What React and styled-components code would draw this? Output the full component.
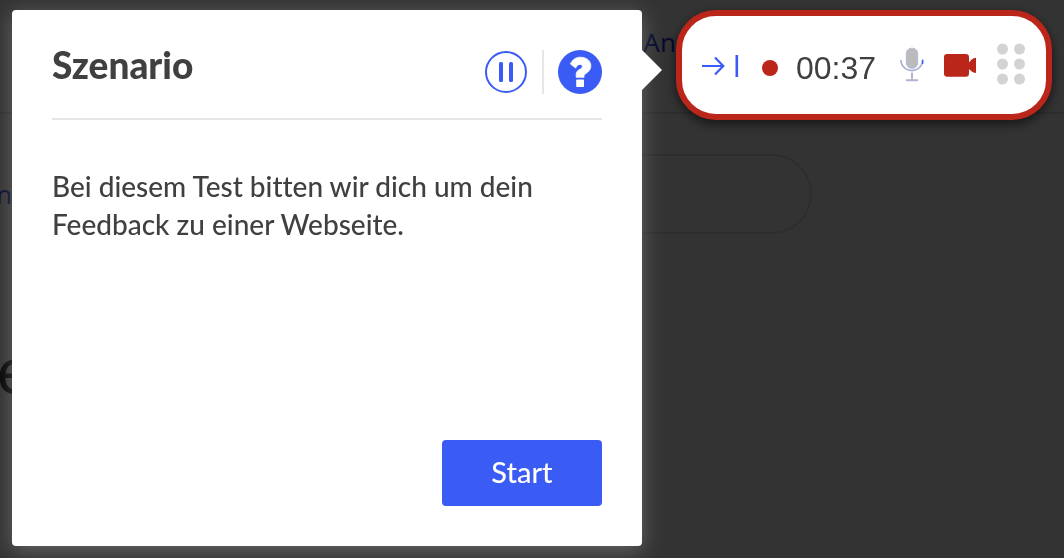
import React, {useState} from 'react';
import styled, {createGlobalStyle} from 'styled-components';

const blue = '#3b5bf5'
const red = '#bb261a'
const dark = '#404040'

const PauseIcon = () => (
  <svg width="44" height="44" viewBox="0 0 44 44" aria-hidden="true">
    <circle cx="22" cy="22" r="20" fill="none" stroke={blue} strokeWidth="2" />
    <rect x="15" y="12" width="4" height="20" rx="1.5" fill={blue} />
    <rect x="25" y="12" width="4" height="20" rx="1.5" fill={blue} />
  </svg>
)

const HelpIcon = () => (
  <svg width="44" height="44" viewBox="0 0 44 44" aria-hidden="true">
    <circle cx="22" cy="22" r="22" fill={blue} />
    <path
      d="M12.4 14C14.4 9.6 17.8 7.2 22.6 7.2C28.6 7.2 32.8 10.8 32.8 15.8C32.8 21.4 28.2 22.8 26 25.2V27.3H18.2V24C18.2 19.4 24.4 19.4 24.4 16.4C24.4 15 23.4 14.4 22 14.4C20 14.4 18.8 16 17.6 18Z"
      fill="#fff"
      stroke="#fff"
      strokeWidth="0.8"
      strokeLinejoin="round"
    />
    <rect x="18.2" y="29.4" width="7.8" height="7.6" rx="0.8" fill="#fff" />
  </svg>
)

const CollapseIcon = () => (
  <svg width="40" height="44" viewBox="0 0 40 44" aria-hidden="true">
    <path d="M0 23H21M13 14.5L21.3 23L13 31.5" fill="none" stroke={blue} strokeWidth="2.2" />
    <path d="M34.8 12V34" stroke={blue} strokeWidth="2.6" />
  </svg>
)

const MicIcon = () => (
  <svg width="28" height="44" viewBox="0 0 28 44" aria-hidden="true">
    <rect x="10.3" y="5.2" width="11.4" height="20" rx="5.2" fill="#bbb" stroke="#a9b3dd" strokeWidth="0.8" />
    <path d="M5 17V19A11 10.5 0 0 0 26.6 19V17" fill="none" stroke="#aeb4d0" strokeWidth="1.8" />
    <path d="M26.6 16.6V21" stroke={blue} strokeWidth="1.4" />
    <path d="M16 29.5V37M10 37.2H22" stroke="#aeb4d0" strokeWidth="1.9" />
  </svg>
)

const CameraIcon = () => (
  <svg width="33" height="44" viewBox="0 0 33 44" aria-hidden="true">
    <rect x="0" y="11" width="25" height="22.8" rx="3.2" fill={red} />
    <path d="M24 19H25.5C27 17 28.5 15.2 32 14.8V30C28.5 29.6 27 27.8 25.5 26.4H24Z" fill={red} />
  </svg>
)

const GripIcon = () => (
  <svg width="28" height="44" viewBox="0 0 28 44" aria-hidden="true">
    {[6, 21, 36].map(y => [5.5, 22.5].map(x => (
      <circle key={`${x}-${y}`} cx={x} cy={y} r="5.5" fill="#d3d3d3" />
    )))}
  </svg>
)

const App = () => {
  const [paused, setPaused] = useState(false)

  return (
    <>
      <GlobalStyle />
      <Page>
        <SiteHeader>
          <SiteLink href="#">An</SiteLink>
        </SiteHeader>
        <SearchRow>
          <SiteLink href="#">n</SiteLink>
          <SearchBox type="search" aria-label="Suche" />
        </SearchRow>
        <Headline>e</Headline>
      </Page>
      <Overlay>
        <Dialog role="dialog" aria-labelledby="scenario-title">
          <DialogHeader>
            <Title id="scenario-title">Szenario</Title>
            <Actions>
              <IconButton aria-label="Pause" aria-pressed={paused} onClick={() => setPaused(!paused)}>
                <PauseIcon />
              </IconButton>
              <Divider />
              <IconButton aria-label="Hilfe">
                <HelpIcon />
              </IconButton>
            </Actions>
          </DialogHeader>
          <Text>Bei diesem Test bitten wir dich um dein Feedback zu einer Webseite.</Text>
          <StartButton>Start</StartButton>
        </Dialog>
        <Recorder>
          <IconButton aria-label="Einklappen">
            <CollapseIcon />
          </IconButton>
          <Recording>
            <Dot />
            <time>00:37</time>
          </Recording>
          <IconButton aria-label="Mikrofon">
            <MicIcon />
          </IconButton>
          <IconButton aria-label="Kamera">
            <CameraIcon />
          </IconButton>
          <IconButton aria-label="Verschieben">
            <GripIcon />
          </IconButton>
        </Recorder>
      </Overlay>
    </>
  )
}

const GlobalStyle = createGlobalStyle`
  * {
    box-sizing: border-box;
  }
  body {
    margin: 0;
    background: #fff;
    color: ${dark};
    font-family: Lato, "Liberation Sans", sans-serif;
    font-variant-ligatures: none;
  }
`;

const Page = styled.div`
  min-height: 100vh;
  overflow: hidden;
  font-family: "Noto Sans", sans-serif;
`;

const SiteHeader = styled.header`
  display: flex;
  justify-content: flex-end;
  height: 114px;
  padding: 24px 388px 0 0;
  border-bottom: 2px solid #e0e0e0;
`;

const SiteLink = styled.a`
  color: #1f35e0;
  font-size: 26px;
  line-height: 36px;
  text-decoration: none;
`;

const SearchRow = styled.div`
  display: flex;
  align-items: center;
  gap: 40px;
  margin: 40px 252px 0 -4px;
`;

const SearchBox = styled.input`
  flex: 1;
  min-width: 0;
  height: 80px;
  padding: 0 40px;
  border: 2px solid #e0e0e0;
  border-radius: 40px;
  background: none;
`;

const Headline = styled.h1`
  margin: 96px 0 0 -4px;
  color: #222;
  font-size: 64px;
  font-weight: 400;
  line-height: 80px;
`;

const Overlay = styled.div`
  position: fixed;
  inset: 0;
  display: flex;
  align-items: flex-start;
  gap: 34px;
  padding: 10px 12px 12px;
  background: rgba(0, 0, 0, 0.8);
`;

const Dialog = styled.section`
  position: relative;
  display: flex;
  flex: 1;
  flex-direction: column;
  align-self: stretch;
  padding: 40px;
  border-radius: 4px;
  background: #fff;
  box-shadow: 0 4px 20px rgba(255, 255, 255, 0.25);

  &::after {
    content: '';
    position: absolute;
    top: 40px;
    left: 100%;
    border: 20px solid transparent;
    border-left-color: #fff;
    border-right-width: 0;
  }
`;

const DialogHeader = styled.header`
  display: flex;
  justify-content: space-between;
  padding-bottom: 24px;
  border-bottom: 2px solid #e6e6e6;
`;

const Title = styled.h2`
  margin: 0;
  font-size: 37px;
  font-weight: 900;
  line-height: 30px;
`;

const Actions = styled.div`
  display: flex;
  gap: 14px;
`;

const Divider = styled.span`
  width: 2px;
  background: #e6e6e6;
`;

const IconButton = styled.button`
  display: flex;
  padding: 0;
  border: 0;
  background: none;
  cursor: pointer;
`;

const Text = styled.p`
  margin: 47px 0;
  font-size: 28px;
  font-weight: 500;
  line-height: 38px;
`;

const StartButton = styled.button`
  align-self: flex-end;
  min-width: 160px;
  height: 66px;
  margin-top: auto;
  padding-bottom: 4px;
  border: 0;
  border-radius: 4px;
  background: ${blue};
  color: #fff;
  font-family: inherit;
  font-size: 29px;
  font-weight: 500;
  cursor: pointer;
`;

const Recorder = styled.div`
  display: flex;
  align-items: center;
  gap: 20px;
  height: 110px;
  padding: 0 21px 0 20px;
  border: 6px solid ${red};
  border-radius: 40px;
  background: #fff;
  box-shadow: 0 4px 12px rgba(0, 0, 0, 0.6);
`;

const Recording = styled.div`
  display: flex;
  align-items: center;
  gap: 18px;
  padding-top: 6px;
  font-family: "Liberation Sans", Arial, sans-serif;
  font-size: 32px;
  line-height: 36px;
`;

const Dot = styled.span`
  width: 16px;
  height: 16px;
  border-radius: 50%;
  background: ${red};
`;

export default App
